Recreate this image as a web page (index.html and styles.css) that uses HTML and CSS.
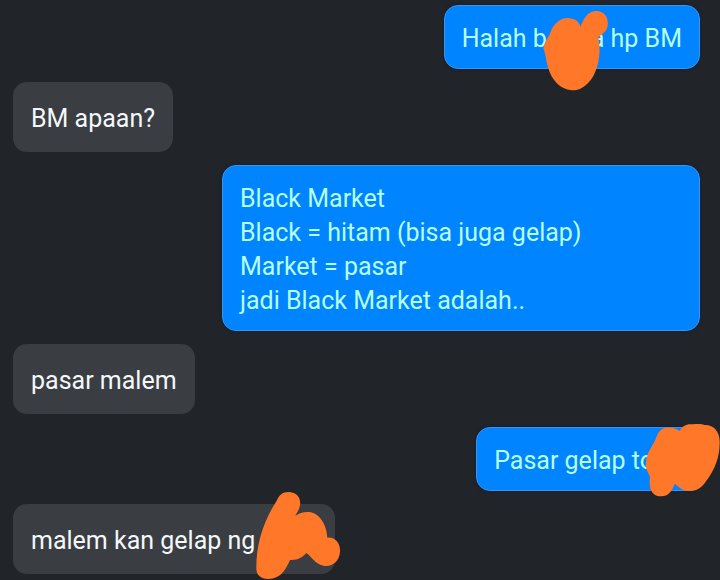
FILE: index.html
```
<!DOCTYPE html>
<html lang="id">
<head>
    <meta charset="UTF-8">
    <meta name="viewport" content="width=device-width, initial-scale=1.0">
    <title>Chat</title>
    <link rel="stylesheet" href="styles.css">
</head>
<body>
    <main class="chat">
        <div class="bubble sent">Halah b<span class="hidden-word word-short"><svg class="scribble scribble-top" width="90" height="100" viewBox="0 0 270 300" aria-hidden="true">
            <path d="M40 145C42 125 55 115 62 95C72 70 95 50 120 55C138 58 148 66 151 80C160 60 170 34 198 33C222 32 237 52 233 78C230 98 213 103 205 112C212 150 210 190 190 228C170 262 145 272 125 271C90 268 65 240 55 205C47 180 48 165 40 145Z"/>
        </svg></span>a hp BM</div>

        <div class="bubble received">BM apaan?</div>

        <div class="bubble sent wide">Black Market<br>
            Black = hitam (bisa juga gelap)<br>
            Market = pasar<br>
            jadi Black Market adalah..</div>

        <div class="bubble received">pasar malem</div>

        <div class="bubble sent">Pasar gelap to<span class="hidden-word word-end"><svg class="scribble scribble-right" width="85" height="90" viewBox="0 0 255 270" aria-hidden="true">
            <path d="M33 140C36 110 52 95 62 72C70 48 82 36 100 38C118 38 128 42 134 48C142 32 155 26 172 28C190 26 200 26 208 30C235 28 256 50 254 85C254 125 240 165 212 200C195 225 175 230 155 227C140 225 130 215 120 206C112 222 105 244 78 244C52 243 40 225 45 185C38 170 30 160 33 140Z"/>
        </svg></span></div>

        <div class="bubble received">malem kan gelap ng<span class="hidden-word word-long"><svg class="scribble scribble-bottom" width="90" height="100" viewBox="219 0 270 300" aria-hidden="true">
            <path d="M229 262C229 190 250 125 290 62C298 45 308 35 328 36C350 38 363 52 360 75C358 90 350 98 346 107C360 97 385 92 402 100C430 115 440 145 442 173C465 170 482 190 480 215C478 245 455 262 430 257C405 252 395 230 379 219C370 230 355 241 330 240C320 262 305 297 265 297C240 296 228 283 229 262Z"/>
        </svg></span></div>
    </main>
</body>
</html>
```
FILE: styles.css
```
* {
    box-sizing: border-box;
}

body {
    margin: 0;
    background: #212429;
    font-family: Roboto, "Liberation Sans", sans-serif;
}

.chat {
    display: flex;
    flex-direction: column;
    align-items: flex-start;
    gap: 13px;
    padding: 5px 20px 6px 13px;
    overflow: hidden;
}

.bubble {
    position: relative;
    max-width: 75%;
    border-radius: 14px;
    font-size: 25px;
    line-height: 34px;
}

.received {
    padding: 20px 18px 16px;
    background: #3a3d41;
    color: #f4f8fa;
}

.sent {
    align-self: flex-end;
    padding: 16px 17px 12px;
    border: 1px solid #3b93ee;
    background: #0084ff;
    box-shadow: 0 0 3px #06213f;
    color: #b5fff2;
}

.wide {
    width: 478px;
}

/* words scribbled over in orange */
.hidden-word {
    display: inline-block;
    position: relative;
    height: 24px;
    vertical-align: top;
}

.word-short {
    width: 44px;
}

.word-end {
    width: 28px;
}

.word-long {
    width: 62px;
}

.scribble {
    position: absolute;
    z-index: 1;
    fill: #ff7729;
}

.scribble-top {
    top: -22px;
    left: -17px;
}

.scribble-right {
    top: -29px;
    left: -19px;
}

.scribble-bottom {
    top: -44px;
    left: -2px;
}
```
